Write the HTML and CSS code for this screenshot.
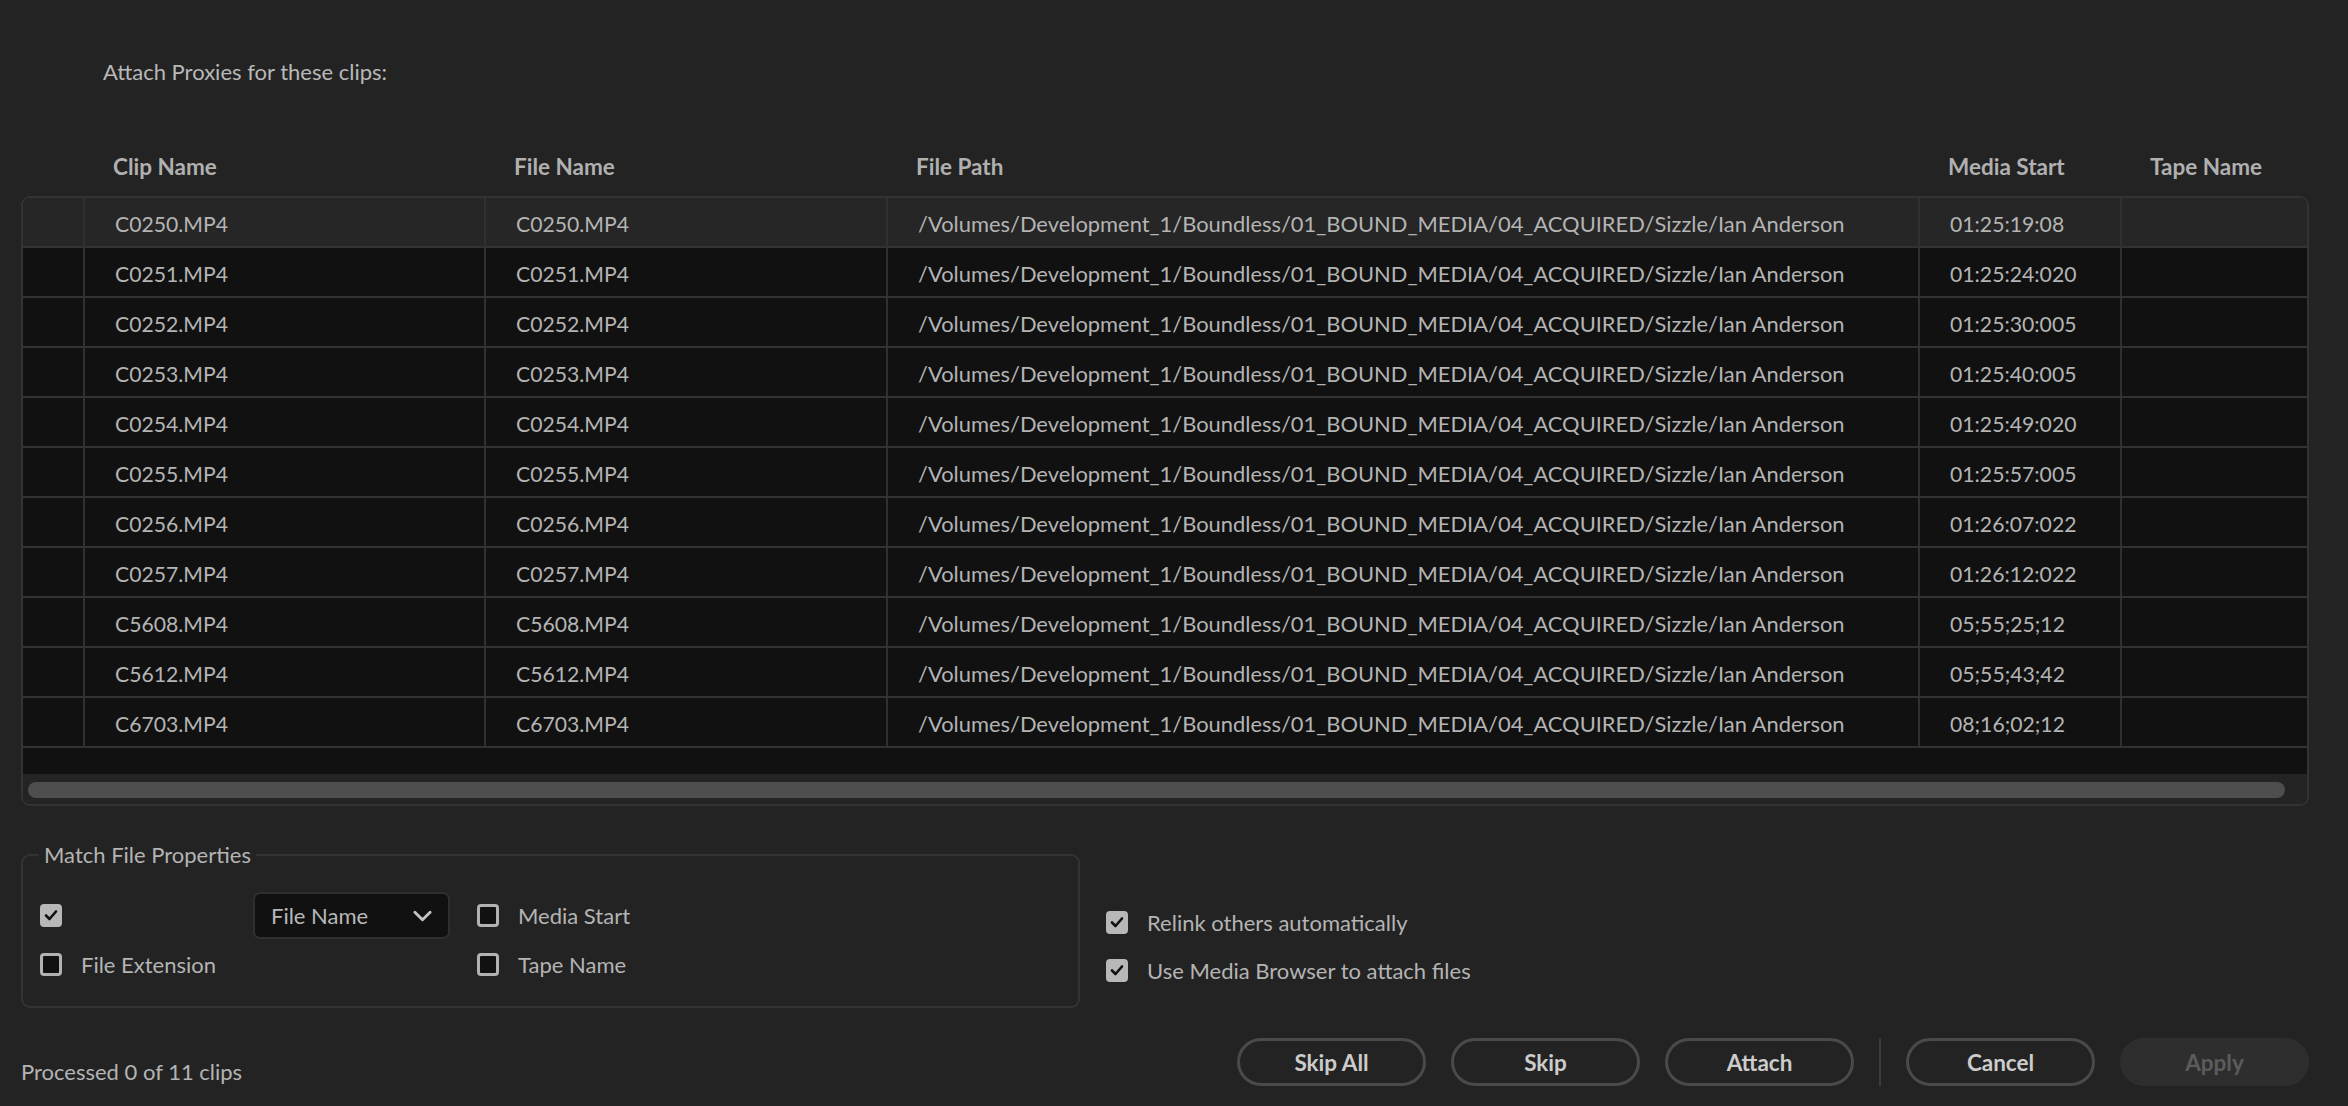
FILE: index.html
```html
<!DOCTYPE html>
<html>
<head>
<meta charset="utf-8">
<link rel="stylesheet" href="styles.css">
</head>
<body>
<div class="dialog">
  <p class="title">Attach Proxies for these clips:</p>

  <div class="grid head">
    <div class="cell"></div>
    <div class="cell">Clip Name</div>
    <div class="cell">File Name</div>
    <div class="cell">File Path</div>
    <div class="cell">Media Start</div>
    <div class="cell">Tape Name</div>
  </div>

  <div class="table">
    <div class="grid row sel"><div class="cell"></div><div class="cell">C0250.MP4</div><div class="cell">C0250.MP4</div><div class="cell path">/Volumes/Development_1/Boundless/01_BOUND_MEDIA/04_ACQUIRED/Sizzle/Ian Anderson</div><div class="cell">01:25:19:08</div><div class="cell"></div></div>
    <div class="grid row"><div class="cell"></div><div class="cell">C0251.MP4</div><div class="cell">C0251.MP4</div><div class="cell path">/Volumes/Development_1/Boundless/01_BOUND_MEDIA/04_ACQUIRED/Sizzle/Ian Anderson</div><div class="cell">01:25:24:020</div><div class="cell"></div></div>
    <div class="grid row"><div class="cell"></div><div class="cell">C0252.MP4</div><div class="cell">C0252.MP4</div><div class="cell path">/Volumes/Development_1/Boundless/01_BOUND_MEDIA/04_ACQUIRED/Sizzle/Ian Anderson</div><div class="cell">01:25:30:005</div><div class="cell"></div></div>
    <div class="grid row"><div class="cell"></div><div class="cell">C0253.MP4</div><div class="cell">C0253.MP4</div><div class="cell path">/Volumes/Development_1/Boundless/01_BOUND_MEDIA/04_ACQUIRED/Sizzle/Ian Anderson</div><div class="cell">01:25:40:005</div><div class="cell"></div></div>
    <div class="grid row"><div class="cell"></div><div class="cell">C0254.MP4</div><div class="cell">C0254.MP4</div><div class="cell path">/Volumes/Development_1/Boundless/01_BOUND_MEDIA/04_ACQUIRED/Sizzle/Ian Anderson</div><div class="cell">01:25:49:020</div><div class="cell"></div></div>
    <div class="grid row"><div class="cell"></div><div class="cell">C0255.MP4</div><div class="cell">C0255.MP4</div><div class="cell path">/Volumes/Development_1/Boundless/01_BOUND_MEDIA/04_ACQUIRED/Sizzle/Ian Anderson</div><div class="cell">01:25:57:005</div><div class="cell"></div></div>
    <div class="grid row"><div class="cell"></div><div class="cell">C0256.MP4</div><div class="cell">C0256.MP4</div><div class="cell path">/Volumes/Development_1/Boundless/01_BOUND_MEDIA/04_ACQUIRED/Sizzle/Ian Anderson</div><div class="cell">01:26:07:022</div><div class="cell"></div></div>
    <div class="grid row"><div class="cell"></div><div class="cell">C0257.MP4</div><div class="cell">C0257.MP4</div><div class="cell path">/Volumes/Development_1/Boundless/01_BOUND_MEDIA/04_ACQUIRED/Sizzle/Ian Anderson</div><div class="cell">01:26:12:022</div><div class="cell"></div></div>
    <div class="grid row"><div class="cell"></div><div class="cell">C5608.MP4</div><div class="cell">C5608.MP4</div><div class="cell path">/Volumes/Development_1/Boundless/01_BOUND_MEDIA/04_ACQUIRED/Sizzle/Ian Anderson</div><div class="cell">05;55;25;12</div><div class="cell"></div></div>
    <div class="grid row"><div class="cell"></div><div class="cell">C5612.MP4</div><div class="cell">C5612.MP4</div><div class="cell path">/Volumes/Development_1/Boundless/01_BOUND_MEDIA/04_ACQUIRED/Sizzle/Ian Anderson</div><div class="cell">05;55;43;42</div><div class="cell"></div></div>
    <div class="grid row"><div class="cell"></div><div class="cell">C6703.MP4</div><div class="cell">C6703.MP4</div><div class="cell path">/Volumes/Development_1/Boundless/01_BOUND_MEDIA/04_ACQUIRED/Sizzle/Ian Anderson</div><div class="cell">08;16;02;12</div><div class="cell"></div></div>
    <div class="filler"></div>
    <div class="hscroll"><div class="thumb"></div></div>
  </div>

  <div class="options">
    <fieldset class="match">
      <legend>Match File Properties</legend>
      <div class="match-grid">
        <div class="check"><span class="box on"><svg viewBox="0 0 22 22"><path d="M6 11.5l3.5 3.5L16 7.5"/></svg></span></div>
        <div class="dropdown"><span>File Name</span><svg class="chev" viewBox="0 0 20 12"><path d="M2 2l8 8 8-8"/></svg></div>
        <div class="check"><span class="box"></span><span class="lbl">Media Start</span></div>
        <div class="check"><span class="box"></span><span class="lbl">File Extension</span></div>
        <div></div>
        <div class="check"><span class="box"></span><span class="lbl">Tape Name</span></div>
      </div>
    </fieldset>
    <div class="extra">
      <div class="check"><span class="box on"><svg viewBox="0 0 22 22"><path d="M6 11.5l3.5 3.5L16 7.5"/></svg></span><span class="lbl">Relink others automatically</span></div>
      <div class="check"><span class="box on"><svg viewBox="0 0 22 22"><path d="M6 11.5l3.5 3.5L16 7.5"/></svg></span><span class="lbl">Use Media Browser to attach files</span></div>
    </div>
  </div>

  <div class="footer">
    <div class="status">Processed 0 of 11 clips</div>
    <div class="buttons">
      <button class="btn">Skip All</button>
      <button class="btn">Skip</button>
      <button class="btn">Attach</button>
      <span class="sep"></span>
      <button class="btn">Cancel</button>
      <button class="btn disabled">Apply</button>
    </div>
  </div>
</div>
</body>
</html>
```

FILE: styles.css
```css
* { box-sizing: border-box; }
html, body { margin: 0; padding: 0; background: #232323; }
body {
  font-family: Lato, "Noto Sans", sans-serif;
  color: #b4b4b4;
  font-size: 21.2px;
  width: 2348px;
  height: 1106px;
  overflow: hidden;
}
.dialog {
  padding: 57px 39px 0 21px;
}
.title {
  margin: 0 0 0 82px;
  font-size: 22px;
  line-height: 30px;
  color: #b8b8b8;
}
.grid {
  display: grid;
  grid-template-columns: 60px 401px 402px 1032px 202px 1fr;
}
.head {
  margin-top: 54px;
  height: 50px;
  padding: 0 2px;
  font-weight: 700;
  font-size: 22.5px;
  color: #b0b0b0;
}
.head .cell {
  display: flex;
  align-items: center;
  padding-left: 30px;
}
.head .cell:first-child { padding: 0; }
.table {
  margin-top: 5px;
  border: 2px solid #333333;
  border-radius: 9px;
  overflow: hidden;
  background: #111111;
}
.row {
  height: 50px;
  border-bottom: 2px solid #333333;
  background: #111111;
}
.row.sel { background: #262626; }
.row .cell {
  display: flex;
  align-items: center;
  padding-left: 30px;
  padding-top: 3px;
  border-left: 2px solid #303030;
  white-space: nowrap;
  overflow: hidden;
}
.row .cell.path { font-size: 21.9px; }
.row .cell:first-child { border-left: none; padding: 0; }
.filler { height: 26px; background: #111111; }
.hscroll {
  height: 30px;
  background: #242424;
  padding: 8px 22px 6px 5px;
}
.thumb {
  height: 16px;
  border-radius: 8px;
  background: #4e4e4e;
}
.options {
  display: flex;
  margin-top: 34px;
}
.match {
  margin: 0;
  width: 1059px;
  border: 2px solid #333333;
  border-radius: 9px;
  padding: 22px 17px 17px 17px;
  min-width: 0;
}
.match legend {
  padding: 0 5px;
  margin-left: -1px;
  font-size: 22px;
  line-height: 30px;
  color: #b4b4b4;
}
.match-grid {
  display: grid;
  grid-template-columns: 213px 224px auto;
  grid-template-rows: 47px 50px;
  align-items: center;
}
.check {
  display: flex;
  align-items: center;
  font-size: 22px;
}
.box {
  width: 22px;
  height: 23px;
  border: 3px solid #b2b2b2;
  border-radius: 4px;
  background: #111111;
  flex: none;
  display: flex;
}
.box.on {
  background: #b8b8b8;
  border-color: #b8b8b8;
}
.box svg {
  width: 22px;
  height: 22px;
  margin: -3px;
  fill: none;
  stroke: #111111;
  stroke-width: 2.6;
  stroke-linecap: round;
  stroke-linejoin: round;
}
.lbl {
  margin-left: 19px;
  color: #b4b4b4;
}
.dropdown {
  height: 47px;
  width: 197px;
  background: #111111;
  border: 2px solid #2f2f2f;
  border-radius: 7px;
  display: flex;
  align-items: center;
  justify-content: space-between;
  padding: 0 16px 0 16px;
  font-size: 22px;
  color: #b8b8b8;
}
.chev {
  width: 19px;
  height: 12px;
  fill: none;
  stroke: #c4c4c4;
  stroke-width: 3;
  stroke-linecap: round;
  stroke-linejoin: round;
}
.extra {
  margin-left: 26px;
  padding-top: 58px;
  display: flex;
  flex-direction: column;
}
.extra .check { height: 48px; }
.footer {
  display: flex;
  margin-top: 30px;
  height: 48px;
}
.status {
  padding-top: 19px;
  line-height: 30px;
  font-size: 22px;
  color: #b4b4b4;
}
.buttons {
  margin-left: auto;
  display: flex;
  gap: 25px;
  align-items: stretch;
}
.btn {
  width: 189px;
  height: 48px;
  border: 3px solid #4a4a4a;
  border-radius: 24px;
  background: transparent;
  color: #cccccc;
  font-family: Lato, "Noto Sans", sans-serif;
  font-weight: 700;
  font-size: 22.5px;
  padding: 0;
}
.btn.disabled {
  background: #2e2e2e;
  border-color: #2e2e2e;
  color: #5c5c5c;
}
.sep {
  width: 2px;
  background: #3c3c3c;
}
```
